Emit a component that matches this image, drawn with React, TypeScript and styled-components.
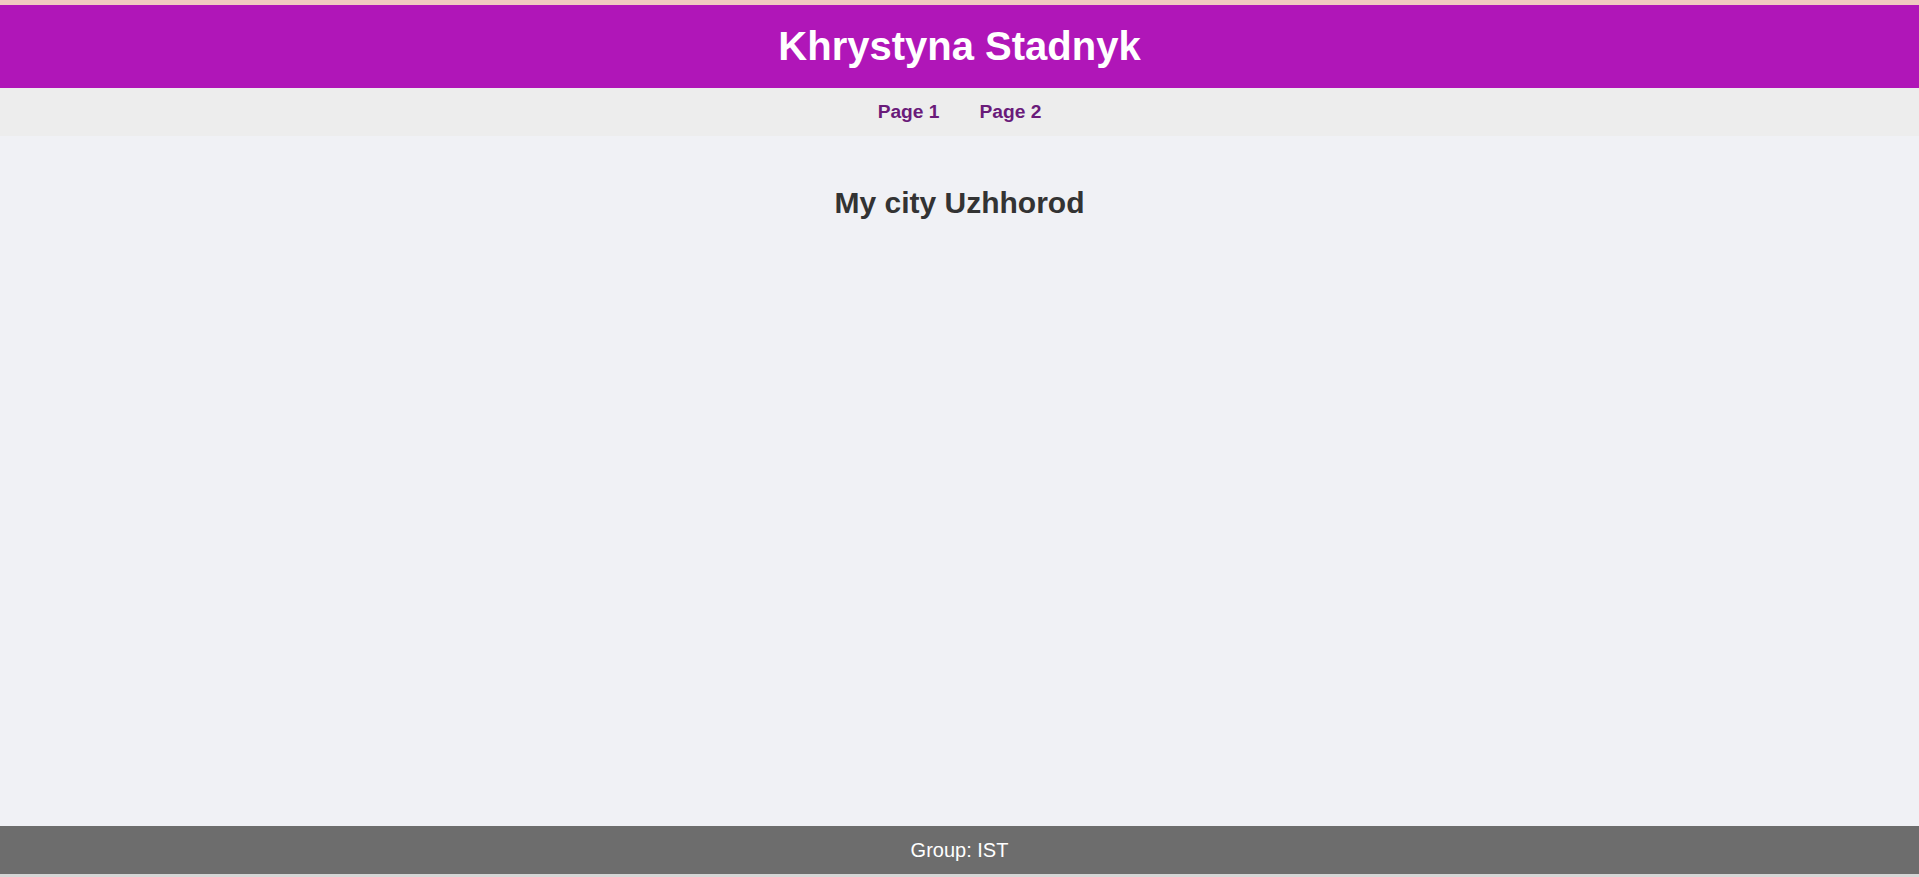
import React from "react";
import styled, { createGlobalStyle } from "styled-components";

const GlobalStyle = createGlobalStyle`
  html, body {
    margin: 0;
    padding: 0;
    background: #d6d6d6;
  }
  body {
    font-family: "Liberation Sans", Arial, sans-serif;
  }
`;

const Page = styled.div`
  display: flex;
  flex-direction: column;
  height: 874px;
  border-top: 5px solid #f0cac0;
  box-sizing: border-box;
`;

const Header = styled.header`
  background: #b016b8;
  height: 83px;
  display: flex;
  align-items: center;
  justify-content: center;
`;

const Title = styled.h1`
  margin: 0;
  color: #ffffff;
  font-size: 40px;
  font-weight: bold;
`;

const Nav = styled.nav`
  background: #ededed;
  height: 48px;
  display: flex;
  align-items: center;
  justify-content: center;
`;

const NavLink = styled.a`
  color: #6a1b7a;
  font-size: 19.2px;
  font-weight: bold;
  text-decoration: none;
  margin: 0 20px;
  cursor: pointer;
`;

const Main = styled.main`
  flex: 1;
  background: #f0f1f5;
  padding-top: 50px;
`;

const Heading = styled.h2`
  margin: 0;
  text-align: center;
  color: #333333;
  font-size: 30px;
  font-weight: bold;
`;

const Footer = styled.footer`
  background: #6d6d6d;
  height: 48px;
  display: flex;
  align-items: center;
  justify-content: center;
  color: #ffffff;
  font-size: 20px;
`;

const App: React.FC = () => {
  return (
    <>
      <GlobalStyle />
      <Page>
        <Header>
          <Title>Khrystyna Stadnyk</Title>
        </Header>
        <Nav>
          <NavLink>Page 1</NavLink>
          <NavLink>Page 2</NavLink>
        </Nav>
        <Main>
          <Heading>My city Uzhhorod</Heading>
        </Main>
        <Footer>Group: IST</Footer>
      </Page>
    </>
  );
};

export default App;
